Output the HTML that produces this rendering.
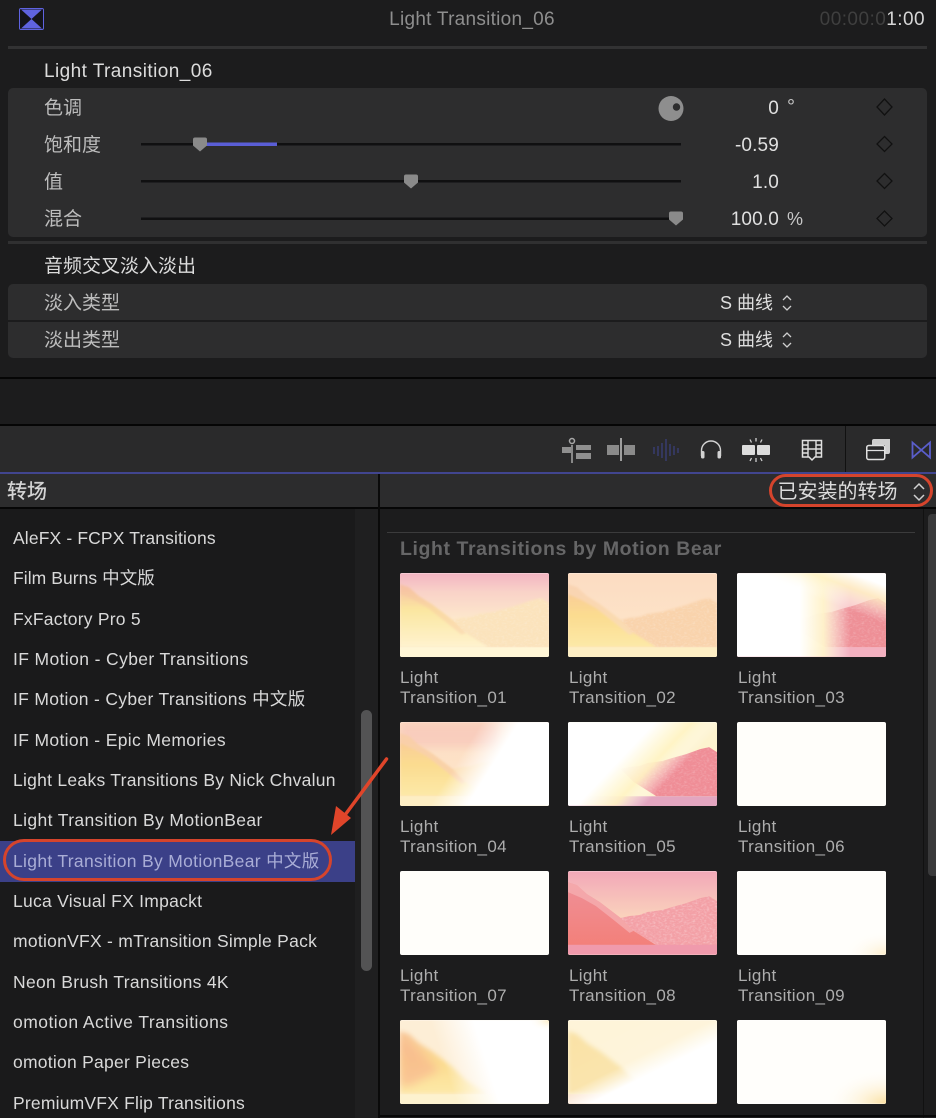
<!DOCTYPE html>
<html><head><meta charset="utf-8"><style>
*{box-sizing:border-box}
html,body{margin:0;padding:0;background:#1c1c1d}
#r{position:relative;width:936px;height:1118px;overflow:hidden;background:#1c1c1d;font-family:"Liberation Sans","Noto Sans CJK SC",sans-serif;color:#ddd}
#r div{position:absolute}
.t{white-space:nowrap;line-height:24px;height:24px}
.lb{left:44px;font-size:19px;color:#bdbdbd}
.v{right:157px;font-size:19px;letter-spacing:.15px;color:#e0e0e0;text-align:right}
.u{left:787px;font-size:18px;color:#c8c8c8}
.l{left:13px;font-size:17.5px;color:#d9d9d9}
.c{font-size:17px;line-height:20px;color:#adadad;white-space:pre;letter-spacing:.35px}
svg{position:absolute;overflow:visible}
.th{width:149px;height:84px;border-radius:2px;overflow:hidden;background:#fff}
.th svg{left:0;top:0;width:149px;height:84px}
</style></head><body><div id="r">

<svg width="0" height="0" style="left:0;top:0"><defs>
<path id="ml" d="M0 11L3 12L9 14L19 23L32 31L53 47L66 60L89 74.500L0 74.500Z"/>
<path id="mr" d="M53 47L62 45L72 44L80 41L95 39L105 36L119 32L133 27L142 25L150 30V74.500H89L66 60Z"/>
<path id="rg" d="M0 11L3 12L9 14L19 23L32 31L53 47L66 60L62 62L46 49L28 35L14 27L0 21Z"/>
<filter id="b1" x="-10%" y="-10%" width="120%" height="120%"><feGaussianBlur stdDeviation="1"/></filter>
<filter id="b2" x="-10%" y="-10%" width="120%" height="120%"><feGaussianBlur stdDeviation="2.500"/></filter>
<filter id="b3" x="-20%" y="-20%" width="140%" height="140%"><feGaussianBlur stdDeviation="4"/></filter>
<filter id="tx" x="0" y="0" width="100%" height="100%"><feTurbulence type="fractalNoise" baseFrequency=".35 .6" numOctaves="2" seed="4"/><feColorMatrix values="0 0 0 0 1 0 0 0 0 1 0 0 0 0 1 2.500 0 0 0 -1.100"/><feComposite in2="SourceAlpha" operator="in"/></filter>
<linearGradient id="sky1" x1="0" y1="0" x2="0" y2="1"><stop offset="0" stop-color="#f2b4c2"/><stop offset=".22" stop-color="#f9d2c8"/><stop offset=".55" stop-color="#fde8cc"/></linearGradient>
<linearGradient id="sky2" x1="0" y1="0" x2="0" y2="1"><stop offset="0" stop-color="#fcdcc2"/><stop offset=".6" stop-color="#fde3c8"/></linearGradient>
<linearGradient id="ly" x1="0" y1="0" x2="0" y2="1"><stop offset="0" stop-color="#f6bfa6"/><stop offset=".4" stop-color="#fbe6a0"/><stop offset="1" stop-color="#fff3cf"/></linearGradient>
<linearGradient id="lo" x1="0" y1="0" x2="0" y2="1"><stop offset="0" stop-color="#f8c79a"/><stop offset=".5" stop-color="#fbdc90"/><stop offset="1" stop-color="#fde9a8"/></linearGradient>
<linearGradient id="lp" x1="0" y1="0" x2="0" y2="1"><stop offset="0" stop-color="#ef9098"/><stop offset="1" stop-color="#f3807a"/></linearGradient>
<linearGradient id="sky8" x1="0" y1="0" x2="0" y2="1"><stop offset="0" stop-color="#f2a8b8"/><stop offset=".55" stop-color="#fad2bc"/></linearGradient>
<linearGradient id="w3" x1="0" y1="0" x2="1" y2="0"><stop offset=".42" stop-color="#fff"/><stop offset=".58" stop-color="#fff5cc" stop-opacity=".95"/><stop offset=".76" stop-color="#fff" stop-opacity="0"/></linearGradient>
<linearGradient id="w4" x1=".55" y1="0" x2=".773" y2=".078"><stop offset="0" stop-color="#fff" stop-opacity="0"/><stop offset="1" stop-color="#fff"/></linearGradient>
<linearGradient id="w5" x1=".1" y1=".3" x2=".95" y2=".75"><stop offset=".3" stop-color="#fff"/><stop offset=".53" stop-color="#fff4c4" stop-opacity=".92"/><stop offset=".72" stop-color="#fff" stop-opacity="0"/></linearGradient>
<linearGradient id="w10" x1=".22" y1=".1" x2=".5" y2=".05"><stop offset="0" stop-color="#fff" stop-opacity="0"/><stop offset="1" stop-color="#fff"/></linearGradient>
<linearGradient id="w11" x1=".25" y1="0" x2=".78" y2=".6"><stop offset=".1" stop-color="#fff" stop-opacity=".25"/><stop offset=".6" stop-color="#fff" stop-opacity=".3"/><stop offset=".85" stop-color="#fff"/></linearGradient>
<linearGradient id="wtop" x1="1" y1="0" x2=".72" y2=".42"><stop offset=".25" stop-color="#fff"/><stop offset=".55" stop-color="#fff3c4" stop-opacity=".8"/><stop offset="1" stop-color="#fff" stop-opacity="0"/></linearGradient>
<radialGradient id="cor" cx="1" cy="1" r=".42"><stop offset="0" stop-color="#fbe0a0"/><stop offset="1" stop-color="#fff" stop-opacity="0"/></radialGradient>
<radialGradient id="cor2" cx="1" cy="1" r=".3"><stop offset="0" stop-color="#fdeecb"/><stop offset="1" stop-color="#fff" stop-opacity="0"/></radialGradient>
<radialGradient id="cor3" cx="1" cy="0" r=".14"><stop offset="0" stop-color="#fdeec4"/><stop offset="1" stop-color="#fff" stop-opacity="0"/></radialGradient>
</defs></svg>

<!-- top header -->
<svg style="left:19px;top:8px" width="25" height="22" viewBox="0 0 25 22"><rect x=".5" y=".5" width="24" height="21" rx="1.500" fill="#14141a" stroke="#5f63e0"/><path d="M2 1.500H23L12.500 11Z M2 20.500H23L12.500 11Z" fill="#5f63e0"/></svg>
<div class="t" style="left:272px;width:400px;top:8px;text-align:center;font-size:19px;color:#8e8e8e;letter-spacing:.27px">Light Transition_06</div>
<div class="t" style="right:11px;top:8px;font-size:19px;color:#3f3f3f;letter-spacing:.45px">00:00:0<span style="color:#d6d6d6">1:00</span></div>
<div style="left:8px;top:46px;width:919px;height:3px;background:#323233"></div>

<div class="t" style="left:44px;top:60px;font-size:19px;color:#dcdcdc;letter-spacing:.43px">Light Transition_06</div>
<div style="left:8px;top:88px;width:919px;height:149px;background:#2d2d2e;border-radius:5px"></div>
<div class="t lb" style="top:97px">色调</div>
<div class="t lb" style="top:134px">饱和度</div>
<div class="t lb" style="top:171px">值</div>
<div class="t lb" style="top:208px">混合</div>

<svg style="left:0;top:0" width="936" height="240" viewBox="0 0 936 240">
<g fill="#101011"><rect x="141" y="143" width="540" height="2.500"/><rect x="141" y="180" width="540" height="2.500"/><rect x="141" y="217.500" width="540" height="2.500"/></g>
<rect x="206" y="142.500" width="71" height="3.500" fill="#5a5ed6"/>
<g fill="#8a8a8a"><path d="M193 139.500q0-2 2-2h10q2 0 2 2v6l-7 6l-7-6z"/><path d="M404 176.500q0-2 2-2h10q2 0 2 2v6l-7 6l-7-6z"/><path d="M669 213.500q0-2 2-2h10q2 0 2 2v6l-7 6l-7-6z"/></g>
<circle cx="671" cy="108.500" r="12.500" fill="#8e8e8e"/><circle cx="676.500" cy="107" r="3.700" fill="#2d2d2e"/>
<g fill="none" stroke="#111" stroke-width="1.300"><path d="M884.500 99l7.500 8l-7.500 8l-7.500-8z"/><path d="M884.500 136.500l7.500 7.500l-7.500 7.500l-7.500-7.500z"/><path d="M884.500 173.500l7.500 7.500l-7.500 7.500l-7.500-7.500z"/><path d="M884.500 211l7.500 7.500l-7.500 7.500l-7.500-7.500z"/></g>
</svg>

<div class="t v" style="top:97px">0</div>
<div class="t u" style="top:95px;font-size:20px">°</div>
<div class="t v" style="top:134px">-0.59</div>
<div class="t v" style="top:171px">1.0</div>
<div class="t v" style="top:208px">100.0</div>
<div class="t u" style="top:207px">%</div>

<div style="left:8px;top:241px;width:919px;height:3px;background:#303031"></div>
<div class="t" style="left:44px;top:255px;font-size:19px;color:#dcdcdc">音频交叉淡入淡出</div>
<div style="left:8px;top:284px;width:919px;height:74px;background:#2d2d2e;border-radius:5px"></div>
<div style="left:8px;top:320px;width:919px;height:2px;background:#1c1c1d"></div>
<div class="t lb" style="top:292px">淡入类型</div>
<div class="t lb" style="top:329px">淡出类型</div>
<div class="t" style="left:720px;top:291px;font-size:18px;color:#dedede">S 曲线</div>
<div class="t" style="left:720px;top:328px;font-size:18px;color:#dedede">S 曲线</div>
<svg style="left:780px;top:293px" width="14" height="56" viewBox="0 0 14 56" fill="none" stroke="#cfcfcf" stroke-width="1.300"><path d="M3 7l4-4l4 4M3 13l4 4l4-4M3 44l4-4l4 4M3 50l4 4l4-4"/></svg>

<div style="left:0;top:377px;width:936px;height:2px;background:#050505"></div>
<div style="left:0;top:424px;width:936px;height:2px;background:#050505"></div>

<!-- toolbar -->
<div style="left:0;top:426px;width:936px;height:46px;background:#2a2a2b"></div>
<div style="left:845px;top:426px;width:1px;height:46px;background:#111"></div>
<div style="left:0;top:472px;width:936px;height:2px;background:#41458f"></div>
<svg style="left:0;top:426px" width="936" height="46" viewBox="0 426 936 46">
<g fill="#8f8f8f"><rect x="562" y="447" width="9" height="6"/><rect x="576" y="445" width="15" height="5"/><rect x="576" y="453" width="15" height="6"/></g>
<path d="M572 445V463" stroke="#a8a8a8" stroke-width="1.500"/><circle cx="572" cy="441" r="2.500" fill="none" stroke="#a8a8a8" stroke-width="1.500"/>
<g fill="#8a8a8a"><rect x="607" y="445" width="12" height="10"/><rect x="624" y="445" width="11" height="10"/></g><path d="M621 438V461" stroke="#c4c4c4" stroke-width="1.500"/>
<g stroke="#3b3f7a" stroke-width="1.300"><path d="M654 447V454M658 446V456M662 443V458M666 439V461M670 444V456M674 446V455M678 448V453"/></g>
<path d="M701.500 456V450.500a9.500 9.500 0 0 1 19 0V456" fill="none" stroke="#d2d2d2" stroke-width="1.400"/><rect x="701" y="451" width="3.500" height="7.500" rx="1.500" fill="#d2d2d2"/><rect x="717.500" y="451" width="3.500" height="7.500" rx="1.500" fill="#d2d2d2"/>
<g fill="#dcdcdc"><rect x="742" y="445" width="13" height="10" rx="1"/><rect x="757" y="445" width="13" height="10" rx="1"/></g>
<path d="M756 438V441.500M750 439.500L751.500 442.500M762 439.500L760.500 442.500M756 458V462M750 461L751.500 458M762 461L760.500 458" stroke="#cfcfcf" stroke-width="1.300"/>
<path d="M802.500 440.500H821.500V457H815L812 460L809 457H802.500Z" fill="none" stroke="#e0e0e0" stroke-width="1.500"/><path d="M808 441V457M816 441V457M803 445H808M816 445H821M803 449H808M816 449H821M803 453H808M816 453H821M808 449H816" stroke="#e0e0e0" stroke-width="1.400" fill="none"/>
<path d="M872 445V441a2 2 0 0 1 2-2H890V452a2 2 0 0 1-2 2H885V445Z" fill="#cfcfcf"/>
<rect x="866.750" y="445.500" width="18" height="14" rx="2" fill="#2a2a2b" stroke="#e0e0e0" stroke-width="1.500"/><path d="M867 450.500H884" stroke="#e0e0e0" stroke-width="1.300"/>
<path d="M912.500 442.500L930 457.500V442.500L912.500 457.500Z" fill="none" stroke="#5a5ecb" stroke-width="1.800"/>
</svg>

<!-- browser header -->
<div style="left:0;top:474px;width:936px;height:34px;background:#2c2c2d"></div>
<div style="left:0;top:507px;width:936px;height:2px;background:#060606"></div>
<div style="left:378px;top:474px;width:2px;height:644px;background:#0a0a0a"></div>
<div class="t" style="left:7px;top:480px;font-size:20px;color:#d6d6d6;-webkit-text-stroke:.3px #d6d6d6">转场</div>
<div class="t" style="left:777.500px;top:480px;font-size:20px;color:#dcdcdc">已安装的转场</div>
<svg style="left:910px;top:482px" width="18" height="20" viewBox="0 0 18 20" fill="none" stroke="#d0d0d0" stroke-width="1.500"><path d="M4 7l5-5l5 5M4 13l5 5l5-5"/></svg>
<div style="left:769px;top:474px;width:164px;height:33px;border:3px solid #d5442c;border-radius:17px"></div>

<!-- list -->
<div style="left:0;top:509px;width:378px;height:609px;background:#1a1a1b"></div>
<div style="left:355px;top:509px;width:23px;height:609px;background:#1f1f20"></div>
<div style="left:361px;top:710px;width:11px;height:261px;background:#535354;border-radius:6px"></div>
<div style="left:0;top:841px;width:355px;height:41px;background:#3b4088"></div>
<div class="t l" style="top:526px;letter-spacing:.14px">AleFX - FCPX Transitions</div>
<div class="t l" style="top:566px;letter-spacing:.06px">Film Burns 中文版</div>
<div class="t l" style="top:607px;letter-spacing:.22px">FxFactory Pro 5</div>
<div class="t l" style="top:647px;letter-spacing:.38px">IF Motion - Cyber Transitions</div>
<div class="t l" style="top:687px;letter-spacing:.32px">IF Motion - Cyber Transitions 中文版</div>
<div class="t l" style="top:728px;letter-spacing:.35px">IF Motion - Epic Memories</div>
<div class="t l" style="top:768px;letter-spacing:.27px">Light Leaks Transitions By Nick Chvalun</div>
<div class="t l" style="top:808px;letter-spacing:.38px">Light Transition By MotionBear</div>
<div class="t l" style="top:849px;letter-spacing:.32px;color:#a9add6">Light Transition By MotionBear 中文版</div>
<div class="t l" style="top:889px;letter-spacing:.26px">Luca Visual FX Impackt</div>
<div class="t l" style="top:929px;letter-spacing:.26px">motionVFX - mTransition Simple Pack</div>
<div class="t l" style="top:970px;letter-spacing:.31px">Neon Brush Transitions 4K</div>
<div class="t l" style="top:1010px;letter-spacing:.47px">omotion Active Transitions</div>
<div class="t l" style="top:1050px;letter-spacing:.25px">omotion Paper Pieces</div>
<div class="t l" style="top:1091px;letter-spacing:.2px">PremiumVFX Flip Transitions</div>
<div style="left:3px;top:839px;width:329px;height:42px;border:3px solid #d5442c;border-radius:21px"></div>

<!-- grid -->
<div style="left:387px;top:532px;width:528px;height:1px;background:#3b3b3c"></div>
<div class="t" style="left:400px;top:537px;font-size:19.500px;font-weight:bold;color:#666667;letter-spacing:.58px">Light Transitions by Motion Bear</div>
<div style="left:923px;top:509px;width:1px;height:609px;background:#111"></div>
<div style="left:928px;top:514px;width:8px;height:362px;background:#3a3a3b;border-radius:4px 0 0 4px"></div>

<div class="th" style="left:399.500px;top:573px"><svg viewBox="0 0 150 84"><rect width="150" height="84" fill="url(#sky1)"/><g filter="url(#b1)"><use href="#mr" fill="#fbe3bc"/><use href="#ml" fill="url(#ly)"/><use href="#rg" fill="#f7bfa4" opacity=".35"/></g><use href="#mr" filter="url(#tx)" opacity=".18"/><rect y="74.500" width="150" height="10" fill="#fff6d6"/></svg></div>
<div class="th" style="left:568.300px;top:573px"><svg viewBox="0 0 150 84"><rect width="150" height="84" fill="url(#sky2)"/><g filter="url(#b1)"><use href="#mr" fill="#f9d3ac"/><use href="#ml" fill="url(#lo)"/><use href="#rg" fill="#fad9bd" opacity=".7"/></g><use href="#mr" filter="url(#tx)" opacity=".2"/><rect y="74.500" width="150" height="10" fill="#fdeec4"/></svg></div>
<div class="th" style="left:737.300px;top:573px"><svg viewBox="0 0 150 84"><rect width="150" height="84" fill="#f8c6c8"/><use href="#mr" fill="#ee8f96"/><use href="#mr" filter="url(#tx)" opacity=".2"/><rect y="74.500" width="150" height="10" fill="#f3b1c0"/><rect width="150" height="84" fill="url(#w3)"/><rect width="150" height="84" fill="url(#wtop)"/></svg></div>

<div class="th" style="left:399.500px;top:722px"><svg viewBox="0 0 150 84"><rect width="150" height="84" fill="url(#sky2)"/><rect width="100" height="25" fill="#f6c0b8" opacity=".55" filter="url(#b3)"/><g filter="url(#b1)"><use href="#mr" fill="#fce0b6"/><use href="#ml" fill="url(#lo)"/><use href="#rg" fill="#f9d0ae" opacity=".8"/></g><rect y="74.500" width="150" height="10" fill="#fdeec4"/><rect width="150" height="84" fill="url(#w4)"/></svg></div>
<div class="th" style="left:568.300px;top:722px"><svg viewBox="0 0 150 84"><rect width="150" height="84" fill="#fdf3cf"/><use href="#mr" fill="#ef8d96"/><use href="#mr" filter="url(#tx)" opacity=".2"/><rect y="74.500" width="150" height="10" fill="#e3a6c0"/><rect width="150" height="84" fill="url(#w5)"/></svg></div>
<div class="th" style="left:737.300px;top:722px;background:#fffefa"></div>

<div class="th" style="left:399.500px;top:871px;background:#fffefa"></div>
<div class="th" style="left:568.300px;top:871px"><svg viewBox="0 0 150 84"><rect width="150" height="84" fill="url(#sky8)"/><use href="#mr" fill="#f3a0a6"/><use href="#mr" filter="url(#tx)" opacity=".3"/><use href="#ml" fill="url(#lp)"/><use href="#rg" fill="#f5aeb0" opacity=".8"/><rect y="74" width="150" height="10" fill="#f09aac"/></svg></div>
<div class="th" style="left:737.300px;top:871px"><svg viewBox="0 0 150 84"><rect width="150" height="84" fill="#fffefb"/><rect width="150" height="84" fill="url(#cor2)"/></svg></div>

<div class="th" style="left:399.500px;top:1020px"><svg viewBox="0 0 150 84"><rect width="150" height="84" fill="#fdeed6"/><g filter="url(#b2)"><use href="#ml" fill="url(#lo)"/><path d="M0 16L19 30L40 50L10 66L0 66Z" fill="#f7ac8c" opacity=".55" filter="url(#b3)"/></g><rect y="74.500" width="150" height="10" fill="#fdf2cf"/><rect width="150" height="84" fill="url(#w10)"/><rect width="150" height="84" fill="url(#cor3)"/></svg></div>
<div class="th" style="left:568.300px;top:1020px"><svg viewBox="0 0 150 84"><rect width="150" height="84" fill="#fdf0cc"/><g filter="url(#b2)"><use href="#ml" fill="#f8d98a"/></g><rect y="74.500" width="150" height="10" fill="#f9d6b6"/><rect width="150" height="84" fill="url(#w11)"/></svg></div>
<div class="th" style="left:737.300px;top:1020px"><svg viewBox="0 0 150 84"><rect width="150" height="84" fill="#fffefb"/><rect width="150" height="84" fill="url(#cor)"/></svg></div>

<div class="c" style="left:400px;top:668px">Light
Transition_01</div>
<div class="c" style="left:569px;top:668px">Light
Transition_02</div>
<div class="c" style="left:738px;top:668px">Light
Transition_03</div>
<div class="c" style="left:400px;top:817px">Light
Transition_04</div>
<div class="c" style="left:569px;top:817px">Light
Transition_05</div>
<div class="c" style="left:738px;top:817px">Light
Transition_06</div>
<div class="c" style="left:400px;top:966px">Light
Transition_07</div>
<div class="c" style="left:569px;top:966px">Light
Transition_08</div>
<div class="c" style="left:738px;top:966px">Light
Transition_09</div>

<div style="left:380px;top:1115px;width:556px;height:2px;background:#080808"></div>

<!-- arrow -->
<svg style="left:0;top:0" width="936" height="1118" viewBox="0 0 936 1118"><path d="M386.500 759L345 815" stroke="#e0452a" stroke-width="3.500" stroke-linecap="round"/><path d="M331 835L336 806L351 818Z" fill="#e0452a"/></svg>
</div></body></html>
